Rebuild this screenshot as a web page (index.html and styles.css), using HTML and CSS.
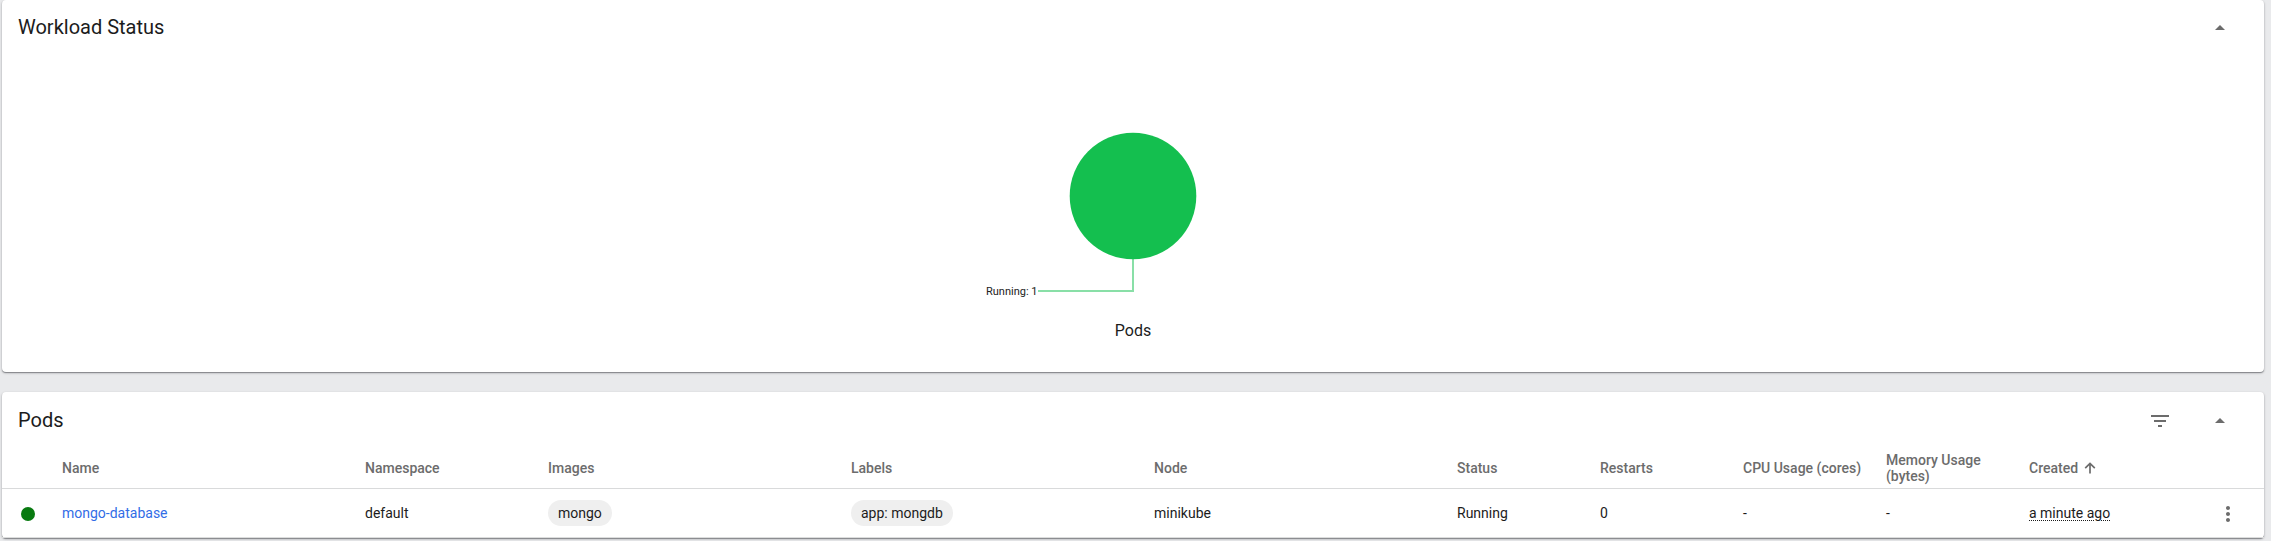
FILE: index.html
```html
<!DOCTYPE html>
<html lang="en">
<head>
<meta charset="utf-8">
<title>Workloads</title>
<link rel="stylesheet" href="styles.css">
</head>
<body>
<main class="page">
  <section class="card status-card">
    <header class="card-header">
      <h2 class="card-title">Workload Status</h2>
      <svg class="icon" viewBox="0 0 24 24"><path d="M7 14l5-5 5 5z"/></svg>
    </header>
    <div class="chart">
      <svg class="pie" width="320" height="170" viewBox="0 0 320 170">
        <circle cx="160" cy="63" r="63.3" fill="#14bf4f"/>
        <path d="M160 126V158H65" fill="none" stroke="#14bf4f" stroke-opacity=".5" stroke-width="2"/>
        <text class="pie-label" x="64.5" y="162" text-anchor="end">Running: 1</text>
      </svg>
      <div class="chart-name">Pods</div>
    </div>
  </section>
  <section class="card pods-card">
    <header class="card-header">
      <h2 class="card-title">Pods</h2>
      <div class="actions">
        <svg class="icon" viewBox="0 0 24 24"><path d="M10 18h4v-2h-4v2zM3 6v2h18V6H3zm3 7h12v-2H6v2z"/></svg>
        <svg class="icon" viewBox="0 0 24 24"><path d="M7 14l5-5 5 5z"/></svg>
      </div>
    </header>
    <div class="row head">
      <span></span>
      <span>Name</span>
      <span>Namespace</span>
      <span>Images</span>
      <span>Labels</span>
      <span>Node</span>
      <span>Status</span>
      <span>Restarts</span>
      <span>CPU Usage (cores)</span>
      <span class="wrap">Memory Usage (bytes)</span>
      <span class="sorted">Created <svg class="arrow" viewBox="0 0 12 12"><path d="M6 11.5V1.5M1.2 6.2L6 1.4L10.8 6.2"/></svg></span>
      <span></span>
    </div>
    <div class="row body">
      <span class="dot"></span>
      <a class="link">mongo-database</a>
      <span>default</span>
      <span><span class="chip">mongo</span></span>
      <span><span class="chip">app: mongdb</span></span>
      <span>minikube</span>
      <span>Running</span>
      <span>0</span>
      <span>-</span>
      <span>-</span>
      <span><span class="age">a minute ago</span></span>
      <svg class="icon" viewBox="0 0 24 24"><path d="M12 8c1.1 0 2-.9 2-2s-.9-2-2-2-2 .9-2 2 .9 2 2 2zm0 2c-1.1 0-2 .9-2 2s.9 2 2 2 2-.9 2-2-.9-2-2-2zm0 6c-1.1 0-2 .9-2 2s.9 2 2 2 2-.9 2-2-.9-2-2-2z"/></svg>
    </div>
  </section>
</main>
</body>
</html>
```
FILE: styles.css
```css
* { box-sizing: border-box; }
body {
  margin: 0;
  background: #e9eaec;
  font-family: Roboto, "Liberation Sans", sans-serif;
  font-size: 14px;
  color: #1c1c1c;
  overflow: hidden;
}
.page {
  display: flex;
  flex-direction: column;
  gap: 20px;
  height: 541px;
  padding: 0 7px 0 2px;
}
.card {
  flex: none;
  background: #fff;
  border-radius: 4px;
  box-shadow: 0 1px 1px #85878b, 0 1px 3px rgba(0, 0, 0, .2);
}
.status-card { height: 372px; }
.pods-card { height: 146px; }
.card-header {
  display: flex;
  align-items: flex-start;
  justify-content: space-between;
  height: 56px;
  padding: 16px 32px 0 16px;
}
.status-card .card-header { padding-top: 15px; }
.card-header .icon { margin-top: 1px; }
.card-title {
  margin: 0;
  font-size: 20px;
  font-weight: 400;
  line-height: 24px;
}
.actions { display: flex; gap: 36px; }
.icon {
  width: 24px;
  height: 24px;
  fill: #6c6c6c;
}
.chart {
  display: flex;
  flex-direction: column;
  align-items: center;
  padding-top: 77px;
}
.pie { display: block; overflow: visible; }
.pie-label { font-size: 11px; fill: #222; }
.chart-name {
  margin-top: 18px;
  font-size: 16px;
  line-height: 20px;
}
.row {
  display: grid;
  grid-template-columns: 60px 303px 183px 303px 303px 303px 143px 143px 143px 143px 143px 1fr;
  align-items: center;
  border-bottom: 1px solid #d9dadb;
}
.head {
  height: 41px;
  font-weight: 500;
  line-height: 16px;
  color: #6c6c6c;
}
.wrap { width: 110px; }
.body { height: 49px; border-bottom-color: #dcdddd; }
.dot {
  width: 14px;
  height: 14px;
  margin: 2px 0 0 19px;
  border-radius: 50%;
  background: #087a10;
}
.link { color: #326de6; }
.chip {
  display: inline-block;
  padding: 0 10px;
  border-radius: 13px;
  background: #efefef;
  line-height: 26px;
}
.sorted { display: flex; align-items: center; gap: 6px; }
.arrow {
  width: 12px;
  height: 12px;
  fill: none;
  stroke: #6c6c6c;
  stroke-width: 1.7;
}
.age {
  text-decoration: underline dotted 1px;
  text-underline-offset: 2px;
}
.body .icon { margin: 2px 0 0 44px; }
```
